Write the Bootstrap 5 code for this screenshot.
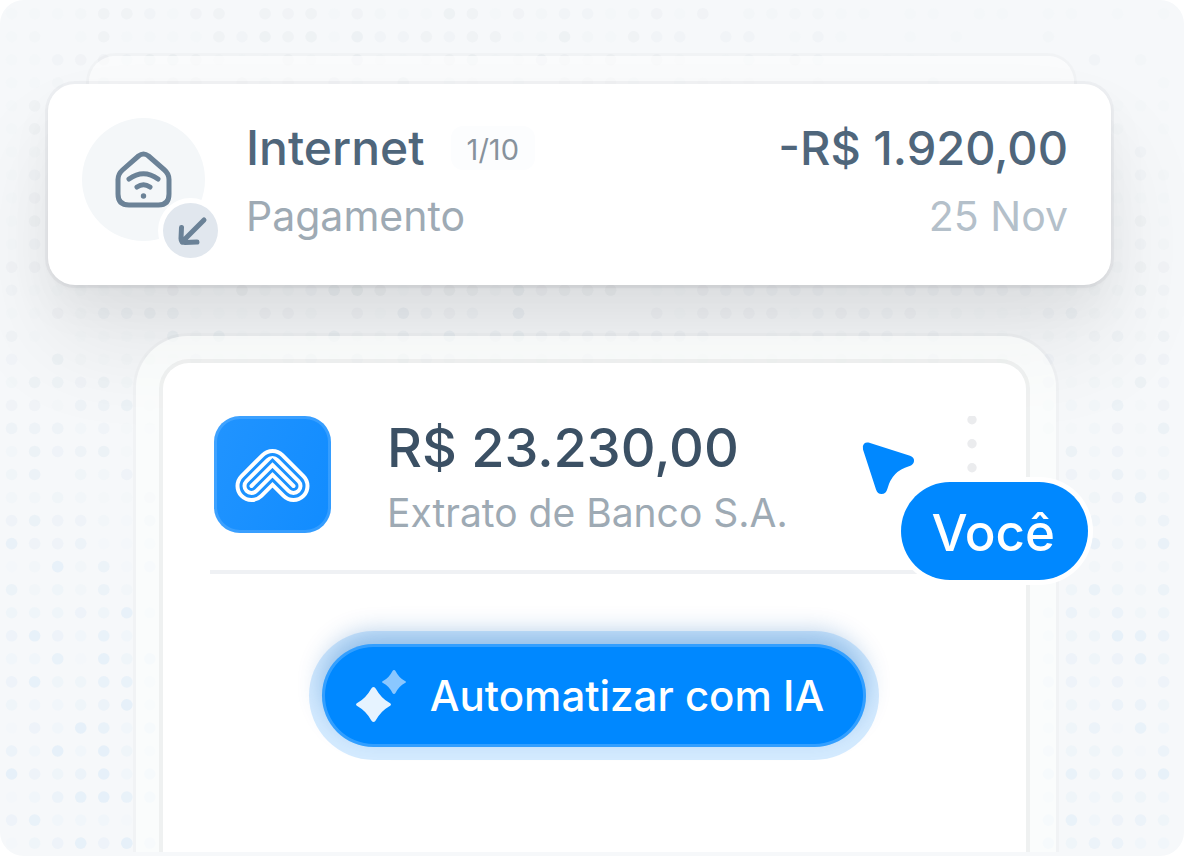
<!DOCTYPE html>
<html lang="pt-BR">
<head>
<meta charset="utf-8">
<meta name="viewport" content="width=device-width, initial-scale=1">
<title>Automatizar com IA</title>
<link href="https://cdn.jsdelivr.net/npm/bootstrap@5.3.0/dist/css/bootstrap.min.css" rel="stylesheet">
<style>
body { font-family: Inter, "Liberation Sans", sans-serif; background: #fff; }
.stage { background: #f6f8fa; border-radius: 24px; padding-bottom: 4px; isolation: isolate; }
.dot-field { inset: 0; width: 100%; height: 100%; z-index: -1; }
.stage-body { padding-top: 56px; }
.sheet-behind { height: 28px; margin: 0 110px 0 89px; border-radius: 26px 26px 0 0; background: rgba(253, 254, 253, .6); box-shadow: 0 0 0 3px rgba(0, 0, 0, .02); }
.payment { margin: 0 73px 0 48px; padding: 34px 43px 43px 34px; border-radius: 27px; background: #fff; box-shadow: 0 0 0 3px rgba(40, 60, 80, .04), 0 3px 5px rgba(0, 0, 0, .04), 0 24px 48px rgba(0, 0, 0, .04), 0 60px 100px rgba(0, 0, 0, .08); }
.payment-icon { width: 123px; height: 123px; background: #f4f7f9; margin-right: 41px; }
.direction { right: -13px; bottom: -17px; width: 55px; height: 55px; background: #e1e7ee; box-shadow: 0 0 0 5px #fff; }
.title-lg { font-size: 48px; line-height: 60px; font-weight: 500; color: #4f667b; }
.title-lg.amount { font-size: 47px; }
.sub-lg { font-size: 41px; line-height: 52px; color: #9eaab4; margin-top: 12px; }
.sub-lg.sub-date { color: #b4c0ca; }
.count-pill { font-size: 29px; line-height: 40px; padding: 4px 16px 0; margin-left: 26px; color: #87929c; background: #fcfdfe; border-radius: 12px; }
.panel { margin: 51px 128px 0 136px; padding: 27px 30px 0 27px; border-radius: 52px 52px 0 0; background: rgba(254, 255, 254, .6); box-shadow: 0 0 0 3px rgba(0, 0, 0, .02); }
.statement { border-radius: 26px 26px 0 0; background: #fff; box-shadow: 0 0 0 4px rgba(30, 30, 40, .05); padding: 53px 48px 0 47px; }
.bank-logo { width: 117px; height: 117px; border-radius: 26px; background: linear-gradient(110deg, #2194ff, #118cff); box-shadow: inset 0 0 0 3px rgba(255, 255, 255, .14); margin: 0 56px 0 4px; }
.balance { font-size: 54px; line-height: 64px; font-weight: 500; color: #3b5064; }
.bank-name { font-size: 39px; line-height: 48px; color: #9eaab4; margin-top: 9px; }
.rule { height: 4px; margin: 33px 0 0; background: #eff1f4; border: 0; opacity: 1; }
.ai-btn { height: 103px; margin-top: 70px; padding: 0 42px 0 34px; border: 0; border-radius: 52px; background: #08f; color: #fff; font-size: 42px; line-height: 52px; font-weight: 500; box-shadow: inset 0 0 0 3px rgba(255, 255, 255, .2), 0 -12px 24px rgba(0, 90, 180, .3), 0 0 0 13px rgba(0, 136, 255, .17); }
.pointer-arrow { top: 78px; right: 110px; }
.pointer-name { top: 119px; right: -62px; height: 98px; padding: 0 33px 0 30px; border-radius: 49px; background: #08f; color: #fff; font-size: 51px; font-weight: 500; line-height: 102px; box-shadow: 0 0 0 5px #fff; }
</style>
</head>
<body>
<main class="stage position-relative d-flex flex-column min-vh-100 overflow-hidden">
  <svg class="dot-field position-absolute" viewBox="0 0 1184 856" preserveAspectRatio="xMidYMin slice" aria-hidden="true" id="dots"></svg>
  <div class="stage-body d-flex flex-column flex-grow-1 overflow-hidden">
    <div class="sheet-behind"></div>

    <section class="payment d-flex align-items-start">
      <div class="payment-icon rounded-circle position-relative d-flex align-items-center justify-content-center flex-shrink-0">
        <svg width="64" height="64" viewBox="0 0 64 64" fill="none" stroke="#6b8297" stroke-width="5" stroke-linecap="round" stroke-linejoin="round" aria-hidden="true">
          <path d="M26.500 8Q31.500 4 36.500 8L52.500 22Q57 26 57 31.500V46Q57 57 46.500 57H17Q6 57 6 46V31.500Q6 26 10.500 22Z"/>
          <path d="M17 31Q31.500 20.500 46 31M25 39Q31.500 34.500 38 39"/>
          <circle cx="31.500" cy="48" r="2.700" fill="#6b8297" stroke="none"/>
        </svg>
        <span class="direction rounded-circle position-absolute d-flex align-items-center justify-content-center">
          <svg width="36" height="36" viewBox="0 0 36 36" fill="none" stroke="#6b8297" stroke-width="5" stroke-linecap="round" stroke-linejoin="round" aria-hidden="true"><path d="M31 7L9 29M8.500 14.500L8 25.500Q8 29.500 12 29.500L24 29"/></svg>
        </span>
      </div>
      <div class="flex-grow-1">
        <div class="d-flex align-items-center">
          <span class="title-lg">Internet</span>
          <span class="count-pill">1/10</span>
        </div>
        <div class="sub-lg">Pagamento</div>
      </div>
      <div class="text-end text-nowrap">
        <div class="title-lg amount">-R$ 1.920,00</div>
        <div class="sub-lg sub-date">25 Nov</div>
      </div>
    </section>

    <section class="panel d-flex flex-column flex-grow-1">
      <div class="statement position-relative flex-grow-1">
        <div class="d-flex align-items-start">
          <div class="bank-logo d-flex align-items-center justify-content-center flex-shrink-0">
            <svg width="80" height="60" viewBox="0 0 80 60" fill="none" stroke-linecap="round" stroke-linejoin="round" aria-hidden="true">
              <path d="M18.500 41L39.500 20L60.500 41" stroke="#fff" stroke-width="32"/>
              <path d="M18.500 41L39.500 20L60.500 41" stroke="#1b92ff" stroke-width="24"/>
              <path d="M18.500 41L39.500 20L60.500 41" stroke="#fff" stroke-width="18"/>
              <path d="M18.500 41L39.500 20L60.500 41" stroke="#1b92ff" stroke-width="10" stroke-linejoin="miter"/>
              <path d="M18.500 41L39.500 20L60.500 41" stroke="#fff" stroke-width="4" stroke-linejoin="miter"/>
            </svg>
          </div>
          <div class="flex-grow-1 text-nowrap">
            <div class="balance">R$ 23.230,00</div>
            <div class="bank-name">Extrato de Banco S.A.</div>
          </div>
          <button type="button" class="btn border-0 p-0 lh-1" aria-label="Mais opções">
            <svg width="14" height="60" viewBox="0 0 14 60" fill="#ebecee"><circle cx="8" cy="3.800" r="4.700"/><circle cx="8" cy="27.800" r="4.700"/><circle cx="8" cy="51.800" r="4.700"/></svg>
          </button>
        </div>
        <hr class="rule">
        <div class="d-flex justify-content-center">
          <button type="button" class="ai-btn d-flex align-items-center text-nowrap">
            <svg class="me-4" width="50" height="54" viewBox="0 0 50 54" aria-hidden="true">
              <path fill="#e6f3ff" d="M17.500 18Q19 18 20 20Q25 29 33 33.500Q35 34.500 35 35.500T33 37.500Q25 42 20 51Q19 53 17.500 53T15 51Q10 42 2 37.500Q0 36.500 0 35.500T2 33.500Q10 29 15 20Q16 18 17.500 18Z"/>
              <path fill="#8ac7ff" d="M38 1Q39 1 39.500 2Q43 9 49 12Q50 12.500 50 13T49 14Q43 17 39.500 24Q39 25 38 25T36.500 24Q33 17 27 14Q26 13.500 26 13T27 12Q33 9 36.500 2Q37 1 38 1Z"/>
            </svg>
            Automatizar com IA
          </button>
        </div>
        <svg class="pointer-arrow position-absolute" width="56" height="56" viewBox="0 0 56 56" fill="#08f" aria-hidden="true"><path d="M8.500 1.600L50 14.800Q54.500 16.500 54 20.300Q53.500 24 49 25.200Q32 30 27.500 47.500Q26 53 21.500 53Q17.500 53 16 48.500L3 8.500Q2 5 4 2.800Q6 .9 8.500 1.600Z"/></svg>
        <span class="pointer-name position-absolute">Você</span>
      </div>
    </section>
  </div>
</main>
<script>
// Dot strength 0-9. Short rows list the left columns, then the right ones.
const rows = [
"111255314505451421165142331241402222110110110110101",
"120151111536561733535511621533033013100101000200000",
"113443665211521721256127425152013143001110000003020",
"112031245143517318132131454313222112110130100100001",
"15|111","15|201","12|030","13|132","14|111","15|151","13|132","44|254",
"311211242162237861465274556011433333112333333122253",
"114255651114420418343080000041444413433412111352132",
"410111162611126225171564444444300123243131111213525",
"306212213111351516431212131121211211212131121312244",
"2654620|312263","4415561|222614","5552312|312416","2645610|162412","3603240|142623",
"2232114|003472","4644215|003125","7445113|007327","1272514|002212","5232521|036325",
"3334372|252523","4742621|233765","2261735|243463","4733663|442414","3223582|232553",
"1428625|235162","5282832|433315","8435825|563557","1257865|232332","4622211|562453","1347484|535522"
];
let out = "";
rows.forEach((row, r) => {
  const [left, right = ""] = row.split("|");
  const t = Math.min(1, Math.max(0, (r - 11) / 16));
  const fill = `rgb(${Math.round(200 - 29 * t)},${Math.round(212 + t)},${Math.round(218 + 29 * t)})`;
  const put = (v, c) => { if (v > 0) out += `<circle cx="${11.600 + c * 23.040}" cy="${13.700 + r * 23.040}" r="5.800" fill="${fill}" fill-opacity="${v * .027}"/>`; };
  [...left].forEach((v, i) => put(+v, i));
  [...right].forEach((v, i) => put(+v, 51 - right.length + i));
});
document.getElementById("dots").innerHTML = out;
</script>
<script src="https://cdn.jsdelivr.net/npm/bootstrap@5.3.0/dist/js/bootstrap.bundle.min.js"></script>
</body>
</html>
